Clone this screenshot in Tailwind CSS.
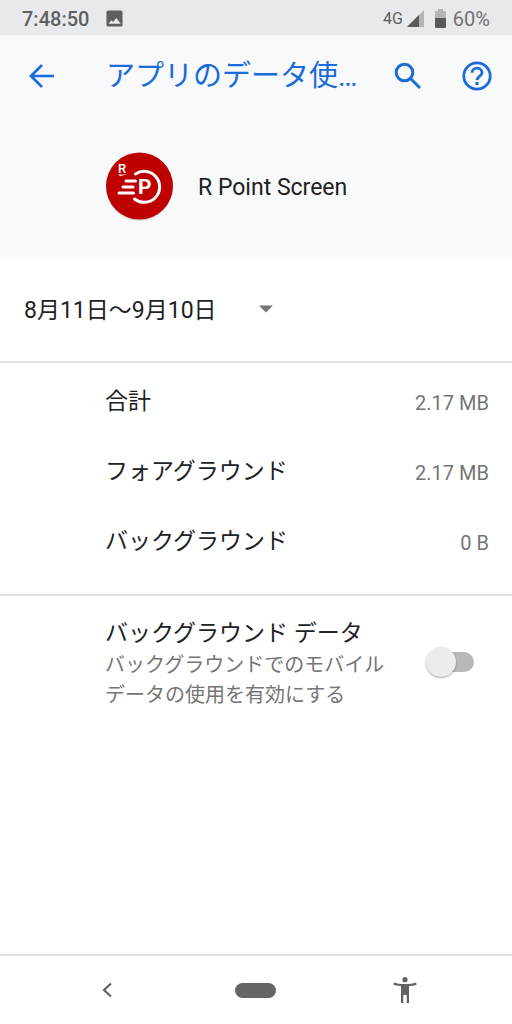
<!DOCTYPE html>
<html lang="ja">
<head>
<meta charset="utf-8">
<meta name="viewport" content="width=device-width, initial-scale=1">
<title>アプリのデータ使用量</title>
<script src="https://cdn.jsdelivr.net/npm/@tailwindcss/browser@4"></script>
</head>
<body class="flex min-h-screen flex-col bg-white font-['Roboto','Noto_Sans_CJK_JP',sans-serif] text-[23px] leading-8 text-[#202124]">

<!-- Status bar -->
<div class="flex h-9 items-center border-b border-[#f0f1f3] bg-[#e8e9ec] pt-[2px] pr-[22px] pl-[22px] text-xl text-[#5f5f5f]">
  <time class="font-medium">7:48:50</time>
  <svg class="ml-[17px] size-[17px]" viewBox="0 0 18 18" aria-hidden="true"><rect x=".5" y=".5" width="17" height="17" rx="2" fill="#5f5f5f"/><path d="M2.500 14.500 5.800 10.800l1.700 2L11 8.500l4.500 6z" fill="#e8e9ec"/></svg>
  <span class="ml-auto text-base">4G</span>
  <svg class="ml-1 size-[17px]" viewBox="0 0 17 17" aria-hidden="true"><path d="M17 0v17H0z" fill="#b4b5b7"/><path d="M12 5v12H0z" fill="#5a5a5a"/></svg>
  <svg class="ml-[11px] h-[19px] w-[11px]" viewBox="0 0 11 19" aria-hidden="true"><path d="M3 0h5v2h2a1 1 0 0 1 1 1v6H0V3a1 1 0 0 1 1-1h2z" fill="#b4b5b7"/><path d="M0 9h11v9a1 1 0 0 1-1 1H1a1 1 0 0 1-1-1z" fill="#5a5a5a"/></svg>
  <span class="ml-[7px] text-[#717171]">60%</span>
</div>

<header class="bg-[#f8f9fb] pb-9">
  <div class="flex h-20 items-center pr-[19px] pl-[26px] text-[#1b6bd8]">
    <button type="button" aria-label="戻る" class="shrink-0">
      <svg class="size-8" viewBox="0 0 32 32" fill="none" stroke="currentColor" stroke-width="2.700"><path d="M28 16H5M16 5 5 16l11 11"/></svg>
    </button>
    <h1 class="ml-12 min-w-0 flex-1 text-[29px] leading-10 whitespace-nowrap">アプリのデータ使…</h1>
    <button type="button" aria-label="検索" class="ml-6 shrink-0">
      <svg class="size-7" viewBox="0 0 28 28" fill="none" stroke="currentColor" stroke-width="3"><circle cx="10.500" cy="10.500" r="8.300"/><path d="m16.500 16.500 9.500 9.500"/></svg>
    </button>
    <button type="button" aria-label="ヘルプ" class="ml-[39px] shrink-0">
      <svg class="size-8" viewBox="0 0 32 32" fill="none" stroke="currentColor" stroke-width="2.800"><circle cx="16" cy="16" r="13.200"/><path d="M11 12.800c0-2.800 2.200-4.600 5-4.600s5 1.900 5 4.600c0 3.300-5 3.800-5 7.300"/><path d="M16 22v3" stroke-width="3"/></svg>
    </button>
  </div>
  <div class="flex items-center gap-6 pt-9 pl-[105px]">
    <svg class="size-[69px]" viewBox="0 0 69 69" aria-hidden="true">
      <circle cx="34.500" cy="35.300" r="33.500" fill="#d8d9db"/><circle cx="34.500" cy="34" r="33.500" fill="#bf0000"/>
      <text x="13" y="21" font-size="13" font-weight="500" fill="#fff">R</text>
      <path d="M13 22.500h9l-7 1.400z" fill="#fff"/>
      <path d="M30.500 22A15.500 15.500 0 1 1 29.500 47M21 29h9.500M18 35h10M14 41h14.500" fill="none" stroke="#fff" stroke-width="3" stroke-linecap="round"/>
      <text x="33" y="42" font-size="21" font-weight="700" fill="#fff">P</text>
    </svg>
    <span class="pt-[3px]">R Point Screen</span>
  </div>
</header>

<main>
  <section class="flex h-[106px] items-center border-b-2 border-[#e2e2e2] pl-6">
    <div class="grid items-center">
      <select aria-label="期間" class="col-start-1 row-start-1 h-12 appearance-none bg-transparent pt-[3px] pr-14">
        <option>8月11日～9月10日</option>
      </select>
      <svg class="pointer-events-none col-start-1 row-start-1 h-2 w-[14px] justify-self-end" viewBox="0 0 14 8" aria-hidden="true"><path d="M0 .5h14L7 7.500z" fill="#757575"/></svg>
    </div>
  </section>

  <dl class="border-b-2 border-[#e2e2e2] pt-1 pr-[23px] pb-[17px] pl-[105px]">
    <div class="flex h-[70px] items-center justify-between"><dt>合計</dt><dd class="pt-[2px] text-xl text-[#757575]">2.17 MB</dd></div>
    <div class="flex h-[70px] items-center justify-between"><dt>フォアグラウンド</dt><dd class="pt-[2px] text-xl text-[#757575]">2.17 MB</dd></div>
    <div class="flex h-[70px] items-center justify-between"><dt>バックグラウンド</dt><dd class="pt-[2px] text-xl text-[#757575]">0 B</dd></div>
  </dl>

  <section class="flex items-center justify-between pt-[22px] pr-[38px] pl-[105px]">
    <label for="bgdata" class="block">
      <span class="block">バックグラウンド データ</span>
      <span id="bgdesc" class="block text-xl leading-[30px] text-[#757575]">バックグラウンドでのモバイル<br>データの使用を有効にする</span>
    </label>
    <input id="bgdata" type="checkbox" role="switch" aria-describedby="bgdesc" class="relative mb-1 h-5 w-[44px] shrink-0 appearance-none rounded-full bg-[#b9b9b9] before:absolute before:-top-[5px] before:-left-[4px] before:size-[30px] before:rounded-full before:bg-[#ececec] before:shadow-[0_1px_2px_rgba(0,0,0,0.35)] checked:bg-[#8ab4f8] checked:before:left-5 checked:before:bg-[#1b6bd8]">
  </section>
</main>

<nav aria-label="システム" class="mt-auto grid h-[70px] grid-cols-[5fr_2fr_5fr] items-center border-t-2 border-[#e2e2e2] text-[#626262]">
  <button type="button" aria-label="戻る" class="justify-self-center">
    <svg class="h-4 w-3" viewBox="0 0 12 16" fill="none" stroke="currentColor" stroke-width="2.200"><path d="M10 1.500 3 8l7 6.500"/></svg>
  </button>
  <button type="button" aria-label="ホーム" class="h-[15px] w-[41px] justify-self-center rounded-full bg-[#666666]"></button>
  <button type="button" aria-label="ユーザー補助" class="justify-self-center">
    <svg class="h-[26px] w-6" viewBox="0 0 24 26" fill="currentColor"><circle cx="12" cy="2.700" r="2.600"/><path d="M.9 5.400C4 6.500 8 6.900 12 6.900s8-.4 11.100-1.500l.6 2.300C21 8.500 18.500 8.900 16 9.100V26h-2.300v-8h-3.400v8H8V9.100C5.500 8.900 3 8.500.3 7.700z"/></svg>
  </button>
</nav>
</body>
</html>
